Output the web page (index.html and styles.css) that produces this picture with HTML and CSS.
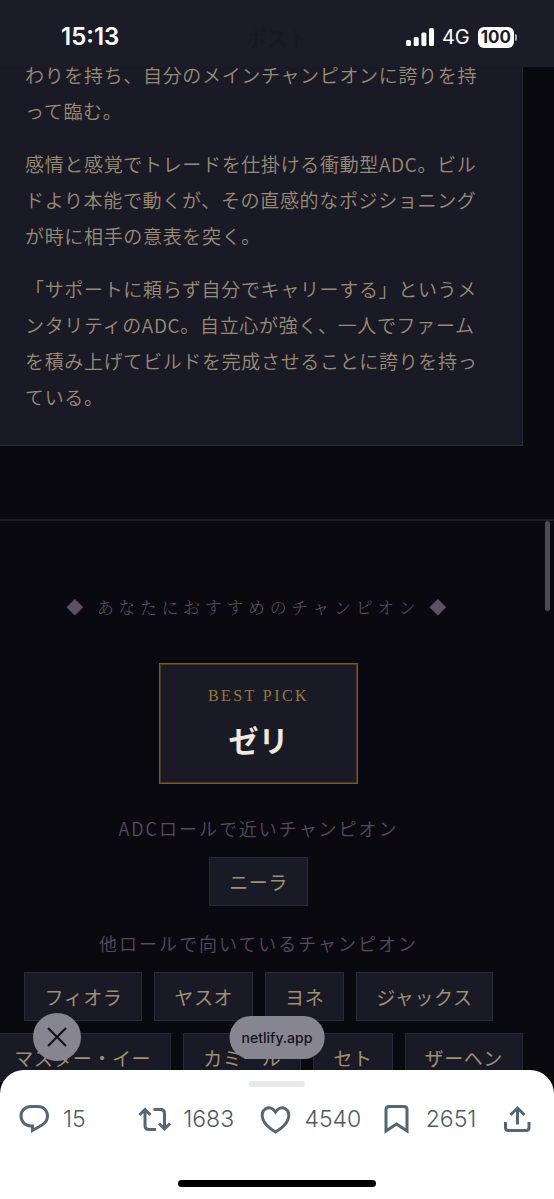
FILE: index.html
```html
<!DOCTYPE html>
<html lang="ja">
<head>
<meta charset="utf-8">
<meta name="viewport" content="width=device-width, initial-scale=1">
<title>チャンピオン診断</title>
<link rel="stylesheet" href="styles.css">
</head>
<body>
<div class="screen">
  <header class="status">
    <time class="status-time">15:13</time>
    <span class="status-title">ポスト</span>
    <div class="status-icons">
      <svg class="signal" viewBox="0 0 28 18" aria-label="電波">
        <rect x="0" y="12" width="5" height="6" rx="1.5"/>
        <rect x="7.700" y="9" width="5" height="9" rx="1.500"/>
        <rect x="15.400" y="4.500" width="5" height="13.500" rx="1.500"/>
        <rect x="23" y="0" width="5" height="18" rx="1.500"/>
      </svg>
      <span class="network">4G</span>
      <span class="battery"><span class="battery-level">100</span><span class="battery-tip"></span></span>
    </div>
  </header>

  <main class="viewport">
    <article class="panel">
      <p>わりを持ち、自分のメインチャンピオンに誇りを持って臨む。</p>
      <p>感情と感覚でトレードを仕掛ける衝動型ADC。ビルドより本能で動くが、その直感的なポジショニングが時に相手の意表を突く。</p>
      <p>「サポートに頼らず自分でキャリーする」というメンタリティのADC。自立心が強く、一人でファームを積み上げてビルドを完成させることに誇りを持っている。</p>
    </article>

    <section class="picks">
      <div class="picks-inner">
        <h2 class="picks-title">◆ あなたにおすすめのチャンピオン ◆</h2>
        <div class="best">
          <span class="best-label">BEST PICK</span>
          <strong class="best-name">ゼリ</strong>
        </div>
        <h3 class="group-title">ADCロールで近いチャンピオン</h3>
        <ul class="tiles">
          <li>ニーラ</li>
        </ul>
        <h3 class="group-title">他ロールで向いているチャンピオン</h3>
        <ul class="tiles">
          <li>フィオラ</li>
          <li>ヤスオ</li>
          <li>ヨネ</li>
          <li>ジャックス</li>
          <li>マスター・イー</li>
          <li>カミール</li>
          <li>セト</li>
          <li>ザーヘン</li>
        </ul>
      </div>
    </section>

    <span class="scrollbar"></span>
    <button class="close" type="button" aria-label="閉じる">
      <svg viewBox="0 0 20 20"><path d="M1 1L19 19M19 1L1 19"/></svg>
    </button>
    <a class="domain" href="#">netlify.app</a>
  </main>

  <footer class="sheet">
    <span class="handle"></span>
    <div class="actions">
      <button type="button" aria-label="返信">
        <svg viewBox="0 0 32 32"><path d="M13 3.500H20C25.500 3.500 29.500 7.500 29.500 13C29.500 17 27.500 20 24 22L14.500 27.500V23H13C7 23 3 18.500 3 13C3 7.500 7.500 3.500 13 3.500Z"/></svg>
        <span>15</span>
      </button>
      <button type="button" aria-label="リポスト">
        <svg viewBox="0 0 32 32"><path d="M1.500 12L7 6.500L12.500 12M7 7.500V22.500Q7 26.500 11 26.500H18M15.500 6.500H22.500Q26.500 6.500 26.500 10.500V26M21 20.500L26.500 26L32 20.500"/></svg>
        <span>1683</span>
      </button>
      <button type="button" aria-label="いいね">
        <svg viewBox="0 0 32 32"><path d="M16.500 9C14 5 10 4 7 5.500C3.500 7.500 2 12 4 16.500C6 21.500 10.500 25.500 16.500 29C22.500 25.500 27 21.500 29 16.500C31 12 29.500 7.500 26 5.500C23 4 19 5 16.500 9Z"/></svg>
        <span>4540</span>
      </button>
      <button type="button" aria-label="ブックマーク">
        <svg viewBox="0 0 32 32"><path d="M5 28V6.500Q5 3.500 8 3.500H23Q26 3.500 26 6.500V28L15.500 21Z"/></svg>
        <span>2651</span>
      </button>
      <button type="button" aria-label="共有">
        <svg viewBox="0 0 32 32"><path d="M3.500 19V24.500Q3.500 27.500 6.500 27.500H24Q27 27.500 27 24.500V19M15.500 21.500V5.500M8.500 12L15.500 5L22.500 12"/></svg>
      </button>
    </div>
    <span class="home"></span>
  </footer>
</div>
</body>
</html>
```
FILE: styles.css
```css
* {
  box-sizing: border-box;
}

body {
  margin: 0;
  background: #0a0910;
  color: #9a8c72;
  font-family: "Noto Sans CJK JP", sans-serif;
}

h2, h3, p, ul {
  margin: 0;
  padding: 0;
}

button {
  margin: 0;
  padding: 0;
  border: 0;
  background: none;
}

.screen {
  display: flex;
  flex-direction: column;
  height: 100vh;
  overflow: hidden;
}

/* Status bar */
.status {
  flex: none;
  display: grid;
  grid-template-columns: 1fr auto 1fr;
  align-items: center;
  padding: 22px 37px 15px;
  background: #1c1c28;
  color: #fff;
  font-family: Inter, sans-serif;
}

.status-time {
  padding-left: 24px;
  font-size: 24px;
  line-height: 30px;
  font-weight: 600;
}

.status-title {
  color: #191923;
  font: 700 21px/24px "Noto Sans CJK JP", sans-serif;
}

.status-icons {
  display: flex;
  justify-content: flex-end;
  align-items: center;
  gap: 8px;
}

.signal {
  width: 28px;
  height: 18px;
  fill: #fff;
}

.network {
  font-size: 20px;
  line-height: 22px;
}

.battery {
  display: flex;
  align-items: center;
  gap: 1px;
}

.battery-level {
  padding: 0 3px;
  border-radius: 6px;
  background: #fff;
  color: #1c1c28;
  font-size: 17px;
  line-height: 21px;
  font-weight: 700;
}

.battery-tip {
  width: 2px;
  height: 7px;
  border-radius: 0 2px 2px 0;
  background: #a9a9b0;
}

/* Page shown in the embedded browser */
.viewport {
  position: relative;
  flex: 1;
  min-height: 0;
  overflow: hidden;
}

.panel {
  display: grid;
  gap: 17px;
  margin: -10px 31px 73px -6px;
  padding: 0 36px 30px 30px;
  border: 1px solid #2a2938;
  border-top: 0;
  background: #1a1a26;
  font-size: 19px;
  line-height: 36px;
  font-weight: 350;
  letter-spacing: 0.035em;
}

.picks {
  border-top: 2px solid #211f2d;
}

.picks-inner {
  display: flex;
  flex-direction: column;
  align-items: center;
  margin: 0 31px 0 -6px;
  padding-top: 74px;
}

.picks-title {
  margin-bottom: 44px;
  color: #5d5062;
  font-family: "Noto Serif CJK JP", "Noto Sans CJK JP", serif;
  font-size: 17px;
  line-height: 24px;
  font-weight: 300;
  letter-spacing: 0.27em;
  white-space: nowrap;
}

.best {
  display: flex;
  flex-direction: column;
  align-items: center;
  gap: 14px;
  padding: 22px 48px 23px;
  border: 1px solid #78592a;
  outline: 1px solid #4a3920;
  outline-offset: -2px;
  background: #1a1a26;
}

.best-label {
  color: #977936;
  font-family: "Liberation Serif", serif;
  font-size: 16px;
  line-height: 20px;
  letter-spacing: 0.15em;
}

.best-name {
  color: #f0e9dc;
  font-size: 30px;
  line-height: 38px;
  padding-bottom: 2px;
  font-weight: 700;
}

.group-title {
  margin: 32px 0 17px;
  color: #554c5c;
  font-size: 18px;
  line-height: 24px;
  font-weight: 350;
  letter-spacing: 0.11em;
}

.tiles + .group-title {
  margin-top: 25px;
}

.tiles {
  display: flex;
  flex-wrap: wrap;
  justify-content: center;
  gap: 12px;
  list-style: none;
}

.tiles li {
  padding: 9px 19px;
  border: 1px solid #2a2938;
  background: #1a1a26;
  color: #9f9072;
  font-size: 19px;
  line-height: 29px;
  letter-spacing: 0.03em;
}

/* Overlays on the page */
.scrollbar {
  position: absolute;
  top: 454px;
  right: 4px;
  width: 5px;
  height: 90px;
  border-radius: 3px;
  background: #4b4a50;
}

.close,
.domain {
  position: absolute;
  display: grid;
  place-items: center;
  background: #87858f;
  color: #12121c;
}

.close {
  left: 33px;
  bottom: 33px;
  width: 48px;
  height: 48px;
  border-radius: 50%;
}

.close svg {
  width: 20px;
  height: 20px;
  fill: none;
  stroke: #12121c;
  stroke-width: 2.200;
}

.domain {
  left: 50%;
  bottom: 35px;
  padding: 0 12px;
  border-radius: 21px;
  transform: translateX(-50%);
  font: 500 14px/43px Inter, sans-serif;
  text-decoration: none;
}

/* Bottom action sheet */
.sheet {
  position: relative;
  flex: none;
  display: flex;
  flex-direction: column;
  align-items: center;
  margin-top: -24px;
  padding: 11px 18px 12px;
  border-radius: 24px 24px 0 0;
  background: #fff;
}

.handle {
  width: 56px;
  height: 6px;
  border-radius: 3px;
  background: #e5eaec;
}

.actions {
  display: grid;
  grid-template-columns: 120fr 121fr 121fr 121fr 34px;
  width: 100%;
  margin: 16px 0 45px;
}

.actions button {
  display: flex;
  align-items: center;
  gap: 13px;
  color: #4c5b66;
  font: 300 23px/32px Inter, sans-serif;
}

.actions svg {
  flex: none;
  width: 32px;
  height: 32px;
  overflow: visible;
  fill: none;
  stroke: #536675;
  stroke-width: 3;
}

.home {
  width: 198px;
  height: 7px;
  border-radius: 4px;
  background: #000;
}
```
